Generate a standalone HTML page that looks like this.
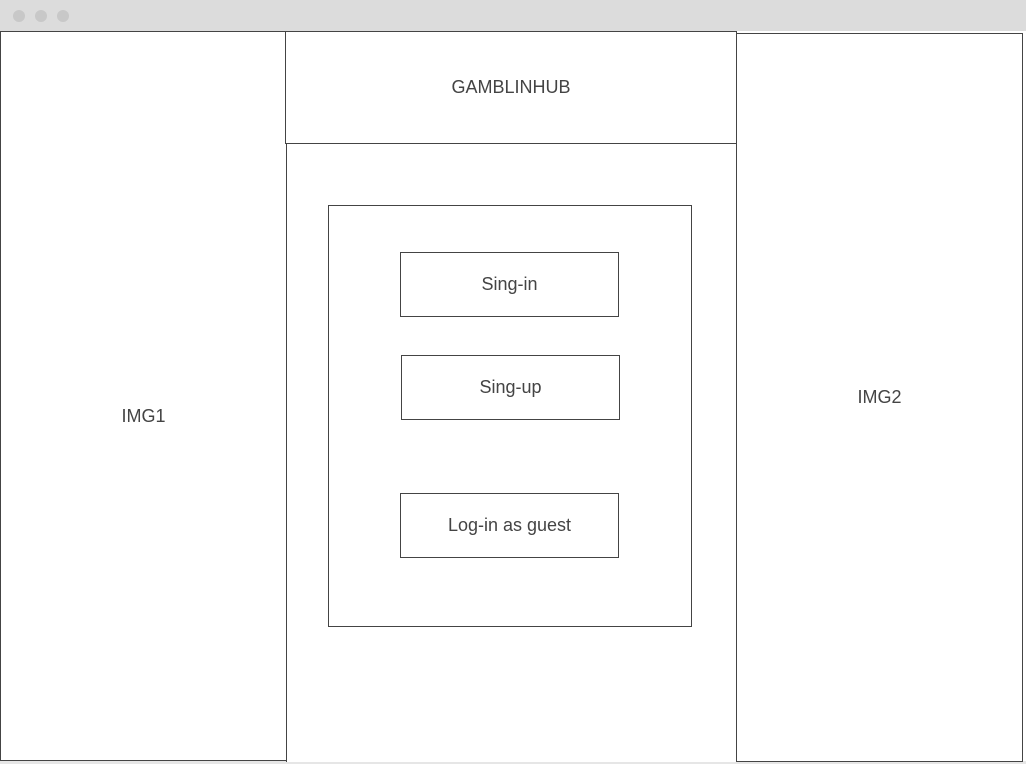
<!DOCTYPE html>
<html><head><style>
body{margin:0;width:1026px;height:764px;background:#fff;position:relative;overflow:hidden;font-family:"Liberation Sans",sans-serif;color:#444;font-size:18px}
.bar{position:absolute;left:0;top:0;width:1026px;height:31px;background:#dcdcdc}
.dot{position:absolute;top:10px;width:12px;height:12px;border-radius:50%;background:#c8c8c8}
.b{position:absolute;border:1px solid #444;box-sizing:border-box;display:flex;align-items:center;justify-content:center;background:#fff}
.foot{position:absolute;left:0;top:761px;width:1026px;height:3px;background:#e6e6e6}
</style></head><body>
<div class="bar"><div class="dot" style="left:13px"></div><div class="dot" style="left:35px"></div><div class="dot" style="left:57px"></div></div>
<div class="foot"></div>
<div class="b" style="left:0;top:31px;width:287px;height:730px;padding-top:40px">IMG1</div>
<div class="b" style="left:736px;top:33px;width:287px;height:729px">IMG2</div>
<div class="b" style="left:286px;top:143px;width:451px;height:619px;border-top:none;border-bottom:none"></div>
<div class="b" style="left:285px;top:31px;width:452px;height:113px">GAMBLINHUB</div>
<div class="b" style="left:328px;top:205px;width:364px;height:422px"></div>
<div class="b" style="left:400px;top:252px;width:219px;height:65px">Sing-in</div>
<div class="b" style="left:401px;top:355px;width:219px;height:65px">Sing-up</div>
<div class="b" style="left:400px;top:493px;width:219px;height:65px">Log-in as guest</div>
</body></html>
